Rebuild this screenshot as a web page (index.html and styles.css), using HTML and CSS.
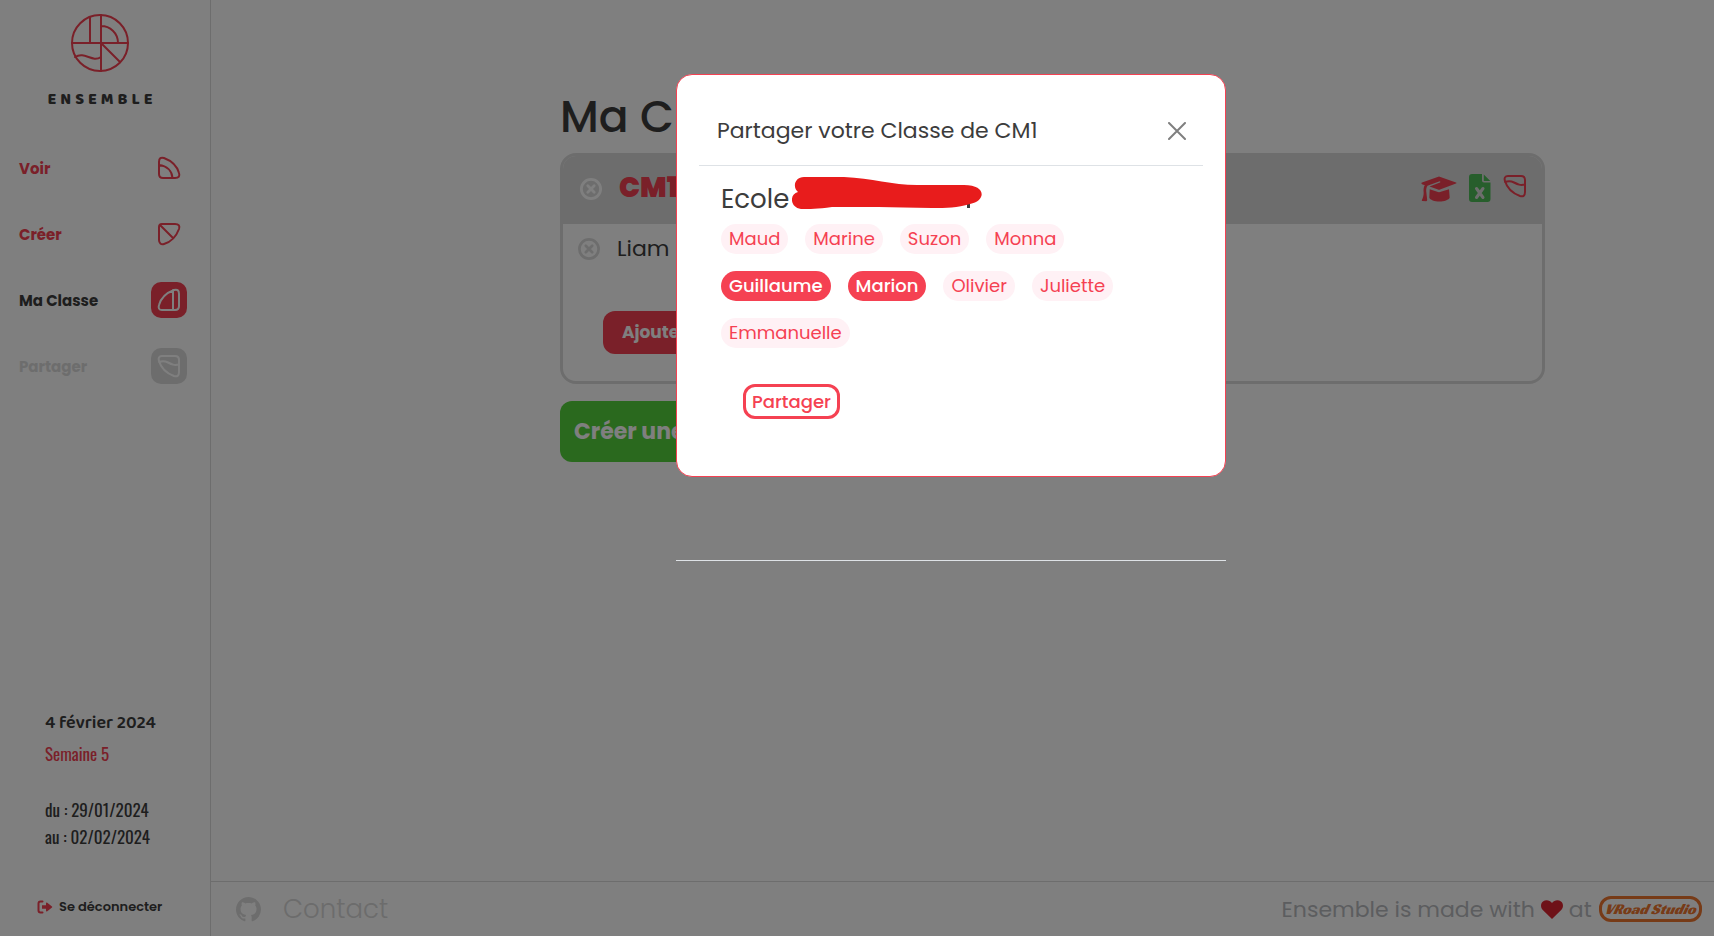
FILE: index.html
```html
<!DOCTYPE html>
<html lang="fr">
<head>
<meta charset="utf-8">
<title>Ensemble – Ma Classe</title>
<link rel="stylesheet" href="styles.css">
</head>
<body>
<svg class="defs" aria-hidden="true">
  <symbol id="i-voir" viewBox="0 0 24 24"><path d="M2 6C2 2 4 1 7 2C15 5 20 10 22 17C23 20 22 22 18 22H6C3 22 2 21 2 18ZM2 9C10 10 15 15 15.500 22"/></symbol>
  <symbol id="i-creer" viewBox="0 0 24 24"><path d="M2 5C2 3 3 2 5 2H18C22 2 23 4 22 7C19 15 14 20 7 22C4 23 2 21 2 18ZM3 3L16 16"/></symbol>
  <symbol id="i-classe" viewBox="0 0 24 24"><path d="M22 6C22 2 20 1 17 2C9 5 4 10 2 17C1 20 2 22 5 22H18C21 22 22 21 22 18ZM16 2V22"/></symbol>
  <symbol id="i-partager" viewBox="0 0 24 24"><path d="M22 18C22 22 20 23 17 22C9 19 4 14 2 7C1 4 2 2 5 2H18C21 2 22 3 22 6ZM2 8C5 7 8 7 11 8.500C15 10.500 17 11.500 22 10.500"/></symbol>
  <symbol id="i-x" viewBox="0 0 24 24"><circle cx="12" cy="12" r="10.500"/><path d="M8.500 8.500L15.500 15.500M15.500 8.500L8.500 15.500"/></symbol>
</svg>

<aside class="sidebar">
  <div class="brand">
    <svg class="brand-mark" viewBox="0 0 60 60" aria-hidden="true"><circle cx="30" cy="30" r="28"/><path d="M2 30H58M31 2V58M20 4V30M31 13C40 13 48 20 48 30M31 30L50 49M5 44C15 38 22 50 31 44"/></svg>
    <span class="brand-name">ENSEMBLE</span>
  </div>
  <nav class="menu">
    <a class="menu-item" href="#">Voir<span class="tile"><svg><use href="#i-voir"/></svg></span></a>
    <a class="menu-item" href="#">Créer<span class="tile"><svg><use href="#i-creer"/></svg></span></a>
    <a class="menu-item is-active" href="#" aria-current="page">Ma Classe<span class="tile"><svg><use href="#i-classe"/></svg></span></a>
    <a class="menu-item is-disabled" href="#" aria-disabled="true">Partager<span class="tile"><svg><use href="#i-partager"/></svg></span></a>
  </nav>
  <div class="dates">
    <strong class="today">4 février 2024</strong>
    <span class="week">Semaine 5</span>
    <span>du : 29/01/2024</span>
    <span>au : 02/02/2024</span>
  </div>
  <button class="logout" type="button">
    <svg viewBox="0 0 16 14" aria-hidden="true"><path class="door" d="M5.500 1.500H3.500C2 1.500 1.500 2.500 1.500 3.500V10.500C1.500 11.500 2 12.500 3.500 12.500H5.500"/><path class="arrow" d="M5 5.300H9V3.200C9 2.300 9.800 2.200 10.300 2.700L15 6.500Q15.600 7 15 7.500L10.300 11.300C9.800 11.800 9 11.700 9 10.800V8.700H5Z"/></svg>
    Se déconnecter
  </button>
</aside>

<div class="page">
  <main class="content">
    <h1>Ma Classe</h1>
    <section class="card">
      <header class="card-head">
        <button class="remove light" type="button" aria-label="Supprimer la classe"><svg><use href="#i-x"/></svg></button>
        <h2>CM1</h2>
        <div class="tools">
          <button type="button" aria-label="Élèves"><svg class="cap" viewBox="0 0 36 26"><path d="M18 0.500L35 6.500Q36 7 35 7.600L19 13.500Q18 13.900 17 13.500L8.500 10.500L19 6.500Q19.800 5.900 18.700 5.300L6.500 9.800C5.300 11.500 5.200 13.500 5.200 15L6.200 24Q6.200 25 5.200 25.200L1.500 25Q0.500 24.800 1 23.800C2.300 21 3 18 2.500 15C2.500 13 2.700 11 3.800 9.300L1 8.300Q-0.200 7 1 6.500ZM8.700 13.200L17 16Q18 16.300 19 16L28 13.200L28.700 21.500C28 24 23 25.500 18.500 25.500C13.500 25.500 9 24 8.300 21.500Z"/></svg></button>
          <button type="button" aria-label="Exporter vers Excel"><svg class="xls" viewBox="0 0 22 28"><path d="M3 0H13V6.500Q13 8.500 15 8.500H21.500V25Q21.500 28 18.500 28H3Q0 28 0 25V3Q0 0 3 0ZM14.800 0.500L21.300 7H14.800Z"/><path class="mark" d="M7.500 14.500L14 23.500M14 14.500L7.500 23.500"/></svg></button>
          <button type="button" aria-label="Partager la classe"><svg class="share"><use href="#i-partager"/></svg></button>
        </div>
      </header>
      <div class="student">
        <button class="remove" type="button" aria-label="Retirer Liam"><svg><use href="#i-x"/></svg></button>
        <span>Liam</span>
      </div>
      <button class="add" type="button">Ajouter</button>
    </section>
    <button class="create" type="button">Créer une classe</button>
  </main>
  <footer class="footer">
    <a class="github" href="#" aria-label="GitHub"><svg viewBox="0 0 16 16"><path d="M8 0C3.580 0 0 3.580 0 8c0 3.540 2.290 6.530 5.470 7.590.4.070.55-.17.55-.38 0-.19-.01-.82-.01-1.490-2.010.37-2.530-.49-2.690-.94-.09-.23-.48-.94-.82-1.130-.28-.15-.68-.52-.01-.53.63-.01 1.080.58 1.230.82.72 1.210 1.870.87 2.330.66.07-.52.28-.87.51-1.070-1.780-.2-3.640-.89-3.640-3.950 0-.87.31-1.590.82-2.150-.08-.2-.36-1.020.08-2.120 0 0 .67-.21 2.200.82.64-.18 1.320-.27 2-.27s1.360.09 2 .27c1.530-1.040 2.200-.82 2.200-.82.44 1.100.16 1.920.08 2.120.51.56.82 1.270.82 2.150 0 3.070-1.870 3.750-3.650 3.950.29.25.54.73.54 1.480 0 1.070-.01 1.930-.01 2.200 0 .21.15.46.55.38A8.010 8.010 0 0 0 16 8c0-4.420-3.580-8-8-8Z"/></svg></a>
    <a class="contact" href="#">Contact</a>
    <p class="credit">Ensemble is made with <svg viewBox="0 0 22 19" aria-label="love"><path d="M11 19L1.800 10C-0.700 7.300-0.500 3.500 2 1.500C4.800-0.700 8.500-0.200 11 3C13.500-0.200 17.200-0.700 20 1.500C22.500 3.500 22.700 7.300 20.200 10Z"/></svg> at</p>
    <a class="studio" href="#">VRoad Studio</a>
  </footer>
</div>

<div class="backdrop">
  <div class="dialog">
    <section class="modal" role="dialog" aria-modal="true" aria-labelledby="share-title">
      <header class="modal-head">
        <h2 id="share-title">Partager votre Classe de CM1</h2>
        <button class="close" type="button" aria-label="Fermer"><svg viewBox="0 0 18 18"><path d="M1 1L17 17M17 1L1 17"/></svg></button>
      </header>
      <div class="modal-body">
        <h3>Ecole <svg class="redacted" viewBox="0 0 190 34" aria-hidden="true"><path class="rest" d="M175 27H178V32H175Z"/><path class="ink" d="M12 1H52C80 2 100 9 125 9H172C195 9 194 25 178 28C165 32 155 32 140 32C100 31 70 31 40 31C25 33 18 33 9 33C-2 32-3 18 6 16C0 11 3 1 12 1Z"/></svg></h3>
        <div class="chips">
          <button class="chip" type="button">Maud</button>
          <button class="chip" type="button">Marine</button>
          <button class="chip" type="button">Suzon</button>
          <button class="chip" type="button">Monna</button>
          <button class="chip is-on" type="button" aria-pressed="true">Guillaume</button>
          <button class="chip is-on" type="button" aria-pressed="true">Marion</button>
          <button class="chip" type="button">Olivier</button>
          <button class="chip" type="button">Juliette</button>
          <button class="chip" type="button">Emmanuelle</button>
        </div>
        <button class="submit" type="button">Partager</button>
      </div>
    </section>
    <hr>
  </div>
</div>
</body>
</html>
```
FILE: styles.css
```css
:root {
  --red: #f54152;
  --grey: #dbdbdb;
  --ink: #3c3c3c;
}

* { box-sizing: border-box; }

body {
  margin: 0;
  min-height: 100vh;
  display: grid;
  grid-template-columns: 211px 1fr;
  background: #fff;
  color: var(--ink);
  font-family: Poppins, Inter, sans-serif;
}

button {
  font: inherit;
  color: inherit;
  background: none;
  border: 0;
  padding: 0;
  cursor: pointer;
}

a { color: inherit; text-decoration: none; }
h1, h2, h3, p { margin: 0; font-weight: 400; }
svg { display: block; fill: none; stroke-linecap: round; stroke-linejoin: round; }
.defs { position: absolute; width: 0; height: 0; }

/* Sidebar */
.sidebar {
  display: flex;
  flex-direction: column;
  border-right: 1px solid var(--grey);
  padding: 13px 23px 17px 19px;
}

.brand {
  display: flex;
  flex-direction: column;
  align-items: center;
  gap: 17px;
  padding-right: 6px;
}
.brand-mark { width: 60px; height: 60px; stroke: var(--red); stroke-width: 2; }
.brand-name {
  padding-left: 4px;
  font: 800 16px/20px "Baloo 2", Lato, sans-serif;
  letter-spacing: 4px;
}

.menu {
  display: flex;
  flex-direction: column;
  gap: 30px;
  margin-top: 40px;
}
.menu-item {
  display: flex;
  align-items: center;
  justify-content: space-between;
  color: var(--red);
  font-size: 15px;
  font-weight: 700;
}
.tile {
  display: grid;
  place-items: center;
  width: 36px;
  height: 36px;
  border-radius: 10px;
}
.tile svg { width: 24px; height: 24px; stroke: currentColor; stroke-width: 2; }
.is-active { color: var(--ink); }
.is-active .tile { background: var(--red); color: #fff; }
.is-disabled { color: var(--grey); }
.is-disabled .tile { background: var(--grey); color: #fff; }

.dates {
  display: flex;
  flex-direction: column;
  margin-top: auto;
  padding-left: 26px;
  font: 400 17px/27px Oswald, "Liberation Sans Narrow", sans-serif;
}
.today { font: 600 18px/30px "Baloo 2", "Open Sans", sans-serif; }
.week { color: var(--red); line-height: 32px; margin-bottom: 26px; }

.logout {
  display: flex;
  align-items: center;
  gap: 6px;
  margin-top: 45px;
  padding-left: 18px;
  font-size: 13px;
  line-height: 24px;
  font-weight: 600;
  white-space: nowrap;
}
.logout svg { width: 16px; height: 14px; flex: none; }
.door { stroke: var(--red); stroke-width: 2; }
.arrow { fill: var(--red); }

/* Page */
.page { display: flex; flex-direction: column; min-width: 0; }

.content { flex: 1; padding: 87px 169px 0 349px; }
.content h1 { font-size: 44px; line-height: 60px; margin-bottom: 6px; font-weight: 500; }

.card {
  overflow: hidden;
  border: 3px solid var(--grey);
  border-radius: 16px;
  padding-bottom: 27px;
}
.card-head {
  display: flex;
  align-items: center;
  background: var(--grey);
  height: 68px;
  padding: 0 15px 2px 17px;
}
.card-head h2 {
  color: var(--red);
  font-size: 28px;
  font-weight: 900;
  margin-left: 17px;
  padding-bottom: 2px;
}
.remove svg { width: 22px; height: 22px; stroke: var(--grey); stroke-width: 3; }
.remove.light svg { stroke: #fff; }

.tools {
  display: flex;
  align-items: flex-start;
  gap: 12px;
  margin-left: auto;
  padding-bottom: 2px;
}
.cap { width: 36px; height: 26px; fill: var(--red); margin-top: 2px; }
.xls { width: 22px; height: 28px; fill: #4fbd58; }
.mark { stroke: var(--grey); stroke-width: 3; }
.share { width: 24px; height: 24px; stroke: var(--red); stroke-width: 2; }

.student {
  display: flex;
  align-items: center;
  gap: 17px;
  padding: 10px 15px;
  font-size: 22px;
  line-height: 30px;
}
.add {
  display: block;
  width: 180px;
  margin: 37px 0 0 40px;
  padding-left: 19px;
  border-radius: 12px;
  background: var(--red);
  color: #fff;
  font-size: 17px;
  line-height: 43px;
  font-weight: 700;
  text-align: left;
}
.create {
  display: block;
  margin-top: 17px;
  padding: 0 14px;
  border-radius: 12px;
  background: #54d23c;
  color: #fff;
  font-size: 22px;
  line-height: 61px;
  font-weight: 700;
}

.footer {
  display: flex;
  align-items: center;
  height: 55px;
  padding: 0 12px 0 25px;
  border-top: 1px solid var(--grey);
  font-weight: 300;
}
.github svg { width: 25px; height: 25px; fill: var(--grey); }
.contact { margin-left: 22px; color: #d8d8d8; font-size: 26px; }
.credit {
  display: flex;
  align-items: center;
  gap: 6px;
  margin-left: auto;
  color: #b9bbbf;
  font-size: 22px;
}
.credit svg { width: 22px; height: 19px; fill: #dc2430; }
.studio {
  margin-left: 7px;
  padding: 0 3px;
  border: 3px solid #ee762f;
  border-radius: 12px;
  color: #ee762f;
  font: italic 400 15px/20px "Racing Sans One", Lato, sans-serif;
}

/* Share dialog */
.backdrop {
  position: fixed;
  inset: 0;
  display: flex;
  justify-content: center;
  align-items: flex-start;
  padding: 74px 0 0 188px;
  background: rgba(0, 0, 0, 0.5);
}
.dialog { width: 550px; }
.dialog hr { margin: 83px 0 0; border: 0; border-top: 1px solid #dee2e6; }

.modal {
  padding: 22px 22px 57px;
  border: 1px solid var(--red);
  border-radius: 16px;
  background: #fff;
}
.modal-head {
  display: flex;
  align-items: center;
  justify-content: space-between;
  padding: 17px 17px 17px 18px;
  border-bottom: 1px solid #dee2e6;
}
.modal-head h2 { font-size: 22px; line-height: 34px; }
.close svg { width: 18px; height: 18px; stroke: #7f7f7f; stroke-width: 2; }

.modal-body { padding: 10px 40px 0 22px; }
.modal-body h3 {
  display: flex;
  align-items: center;
  gap: 3px;
  font-size: 26px;
  line-height: 40px;
}
.redacted { width: 190px; height: 34px; margin-bottom: 12px; }
.ink { fill: #e81c1c; }
.rest { fill: var(--ink); }

.chips {
  display: flex;
  flex-wrap: wrap;
  gap: 17px;
  margin-top: 2px;
}
.chip {
  padding: 0 8px;
  border-radius: 15px;
  background: #fff1f5;
  color: var(--red);
  font-size: 18px;
  line-height: 30px;
}
.chip.is-on { background: var(--red); color: #fff; font-weight: 500; }

.submit {
  margin: 36px 0 0 22px;
  padding: 0 6px;
  border: 3px solid var(--red);
  border-radius: 12px;
  color: var(--red);
  font-size: 18px;
  line-height: 29px;
  font-weight: 500;
}
```
